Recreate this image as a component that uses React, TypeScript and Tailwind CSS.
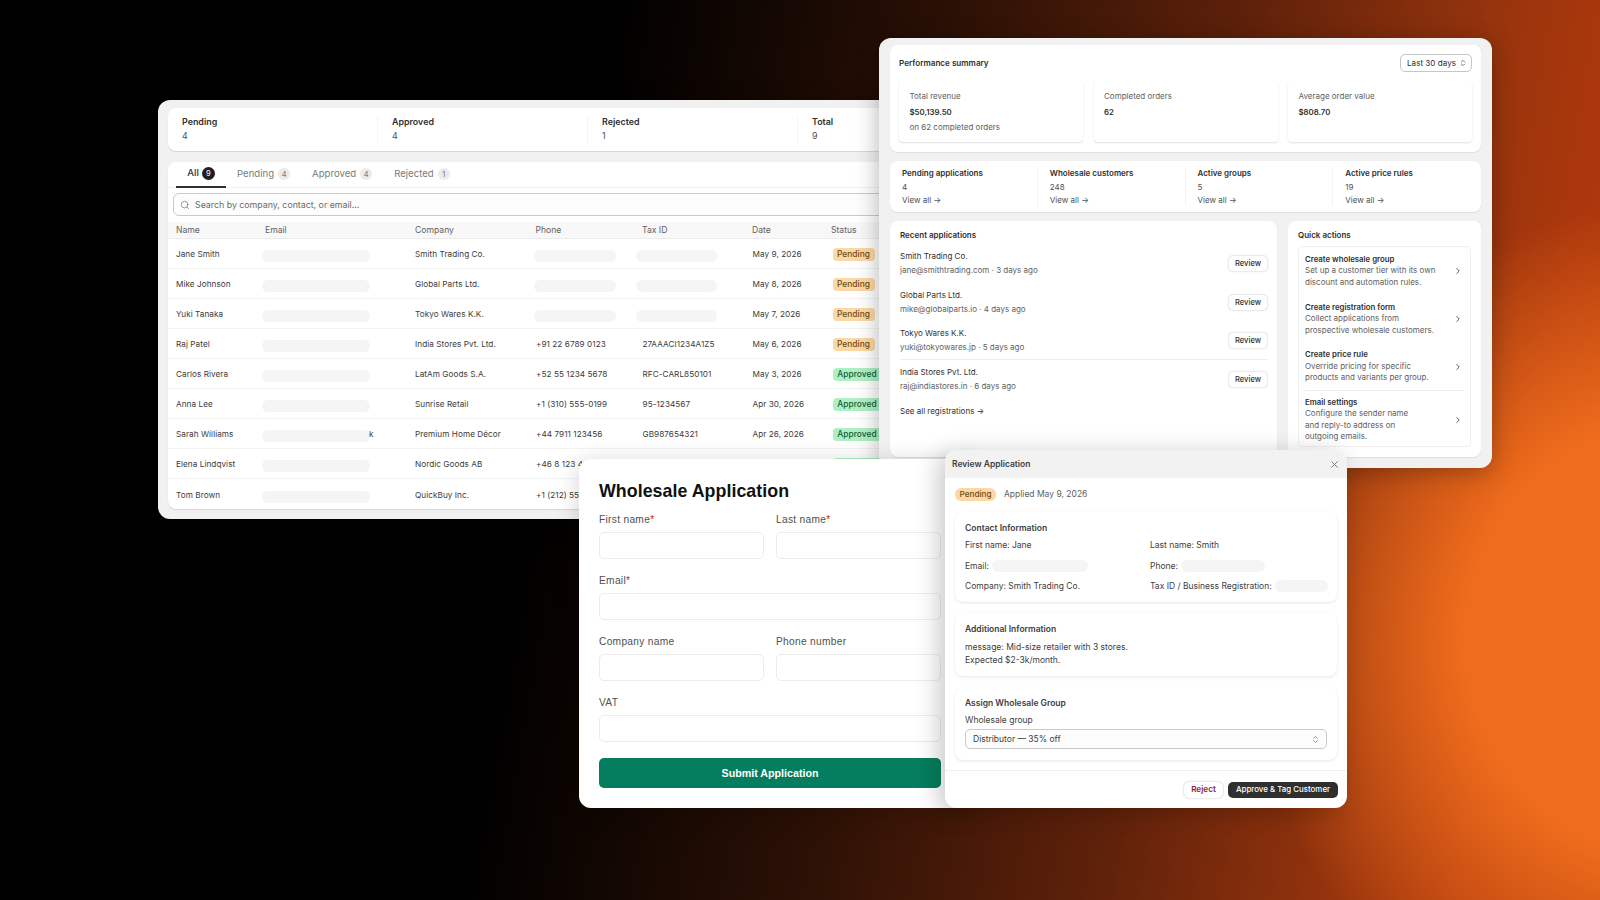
import React from "react";
import { Search, ChevronsUpDown, ChevronRight, X } from "lucide-react";

const Pill = ({ w }: { w: string }) => <div className={`${w} h-3 rounded-md bg-[#f5f5f5]`} />;

function Badge({ kind }: { kind: "Pending" | "Approved" }) {
  return kind === "Pending" ? (
    <span className="inline-flex h-[13px] w-[42px] items-center justify-center rounded bg-[#fbd8a4] text-[8.4px] font-medium text-[#6f4c12]">Pending</span>
  ) : (
    <span className="inline-flex h-[13px] w-[49px] items-center justify-center rounded bg-[#aff0c3] text-[8.4px] font-medium text-[#0f5c33]">Approved</span>
  );
}

const rows: { n: string; c: string; p?: string; t?: string; d: string; s: "Pending" | "Approved" }[] = [
  { n: "Jane Smith", c: "Smith Trading Co.", d: "May 9, 2026", s: "Pending" },
  { n: "Mike Johnson", c: "Global Parts Ltd.", d: "May 8, 2026", s: "Pending" },
  { n: "Yuki Tanaka", c: "Tokyo Wares K.K.", d: "May 7, 2026", s: "Pending" },
  { n: "Raj Patel", c: "India Stores Pvt. Ltd.", p: "+91 22 6789 0123", t: "27AAACI1234A1Z5", d: "May 6, 2026", s: "Pending" },
  { n: "Carlos Rivera", c: "LatAm Goods S.A.", p: "+52 55 1234 5678", t: "RFC-CARL850101", d: "May 3, 2026", s: "Approved" },
  { n: "Anna Lee", c: "Sunrise Retail", p: "+1 (310) 555-0199", t: "95-1234567", d: "Apr 30, 2026", s: "Approved" },
  { n: "Sarah Williams", c: "Premium Home Décor", p: "+44 7911 123456", t: "GB987654321", d: "Apr 26, 2026", s: "Approved" },
  { n: "Elena Lindqvist", c: "Nordic Goods AB", p: "+46 8 123 456 78", t: "SE556677889901", d: "Apr 21, 2026", s: "Approved" },
  { n: "Tom Brown", c: "QuickBuy Inc.", p: "+1 (212) 555-0147", t: "13-7654321", d: "Apr 18, 2026", s: "Approved" },
];

function TableWindow() {
  return (
    <div className="absolute left-[158px] top-[100px] flex h-[419px] w-[860px] flex-col gap-[11px] rounded-xl bg-[#f1f1f1] px-[10px] pb-[10px] pt-[8px] text-[#303030] shadow-[0_4px_24px_rgba(0,0,0,0.3)]">
      <div className="grid h-[43px] shrink-0 grid-cols-4 rounded-lg bg-white py-[8px] shadow-[0_1px_1px_rgba(0,0,0,0.12)]">
        {[["Pending", "4"], ["Approved", "4"], ["Rejected", "1"], ["Total", "9"]].map(([l, v], i) => (
          <div key={l} className={`flex flex-col gap-[2px] pl-[14px] text-[8.9px] leading-[12px] ${i < 3 ? "border-r border-[#f5f5f5]" : ""}`}>
            <span className="font-semibold">{l}</span>
            <span className="text-[#505050]">{v}</span>
          </div>
        ))}
      </div>
      <div className="flex flex-1 flex-col rounded-lg bg-white shadow-[0_1px_1px_rgba(0,0,0,0.12)]">
        <div className="flex h-[26px] shrink-0 items-center border-b border-[#f1f1f1] pl-2 text-[9.6px]">
          <div className="flex h-[26px] w-[50px] items-center justify-center gap-[3px] border-b-2 border-[#303030]">
            <span className="font-medium">All</span>
            <span className="flex h-[13px] w-[13px] items-center justify-center rounded-full bg-[#1f1f1f] text-[7.5px] text-white">9</span>
          </div>
          {[["Pending", "4", "ml-[11px]"], ["Approved", "4", "ml-[22px]"], ["Rejected", "1", "ml-[22px]"]].map(([l, v, m]) => (
            <div key={l} className={`flex items-center gap-[4px] text-[#7a7a7a] ${m}`}>
              <span>{l}</span>
              <span className="flex h-[12px] w-[12px] items-center justify-center rounded-full bg-[#ebebeb] text-[7.5px]">{v}</span>
            </div>
          ))}
        </div>
        <div className="mx-[5px] mt-[5px] flex h-[23px] shrink-0 items-center gap-[5px] rounded-md border border-[#c9c9c9] bg-[#fdfdfd] pl-[6px] text-[8.8px] text-[#6b6b6b]">
          <Search className="h-[10px] w-[10px]" strokeWidth={1.6} />
          <span>Search by company, contact, or email...</span>
        </div>
        <div className="mt-[6px] flex h-[17px] shrink-0 items-center border-b border-[#ececec] bg-[#f8f8f8] text-[8.6px] text-[#616161]">
          <span className="w-[97px] pl-2">Name</span>
          <span className="w-[150px]">Email</span>
          <span className="w-[120.5px]">Company</span>
          <span className="w-[106.5px]">Phone</span>
          <span className="w-[110px]">Tax ID</span>
          <span className="w-[79px]">Date</span>
          <span>Status</span>
        </div>
        {rows.map((r, i) => (
          <div key={r.n} className={`flex h-[30px] shrink-0 items-center pt-[2px] text-[8.2px] tracking-[0.05px] text-[#3c3c3c] ${i < 8 ? "border-b border-[#f3f3f3]" : ""}`}>
            <span className="w-[94px] pl-2">{r.n}</span>
            <div className="relative w-[153px] pt-[3px]">
              <Pill w="w-[108px]" />
              {r.n === "Sarah Williams" && <span className="absolute left-[107px] top-[1px]">k</span>}
            </div>
            <span className="w-[118.5px]">{r.c}</span>
            {r.p ? <span className="w-[109px] pl-[2.5px]">{r.p}</span> : <div className="w-[102px] pt-[3px]"><Pill w="w-[82px]" /></div>}
            {r.t ? <span className="w-[110px]">{r.t}</span> : <div className="w-[117px] pt-[3px]"><Pill w="w-[81px]" /></div>}
            <span className="w-[80px]">{r.d}</span>
            <Badge kind={r.s} />
          </div>
        ))}
      </div>
    </div>
  );
}

function PerformanceWindow() {
  return (
    <div className="absolute left-[879px] top-[38px] flex h-[430px] w-[613px] flex-col gap-[9px] rounded-xl bg-[#f1f1f1] p-[7px_11px_10px] text-[#303030] shadow-[0_4px_24px_rgba(0,0,0,0.3)]">
      <div className="h-[107px] shrink-0 rounded-lg bg-white px-[9px] pt-[9px] shadow-[0_1px_1px_rgba(0,0,0,0.08)]">
        <div className="flex h-[18px] items-center justify-between">
          <span className="text-[8.1px] font-semibold">Performance summary</span>
          <span className="flex h-[18px] w-[72px] items-center justify-center gap-[3px] rounded-[5px] border border-[#c6c6c6] pl-[2px] text-[8.1px]">
            Last 30 days <ChevronsUpDown className="h-[8px] w-[8px]" />
          </span>
        </div>
        <div className="mt-[9px] grid h-[61px] grid-cols-3 gap-[10.5px]">
          {[["Total revenue", "$50,139.50", "on 62 completed orders"], ["Completed orders", "62", ""], ["Average order value", "$808.70", ""]].map(([a, b, c]) => (
            <div key={a} className="flex flex-col gap-[3.5px] rounded bg-white px-[10.5px] pt-[9px] text-[8px] leading-[12px] shadow-[0_1px_2px_rgba(0,0,0,0.13)]">
              <span className="text-[#616161]">{a}</span>
              <span className="text-[7.8px] font-semibold">{b}</span>
              {c && <span className="text-[#616161]">{c}</span>}
            </div>
          ))}
        </div>
      </div>
      <div className="grid h-[51px] shrink-0 grid-cols-4 rounded-lg bg-white py-[6px] shadow-[0_1px_1px_rgba(0,0,0,0.08)]">
        {[["Pending applications", "4"], ["Wholesale customers", "248"], ["Active groups", "5"], ["Active price rules", "19"]].map(([a, b], i) => (
          <div key={a} className={`flex flex-col gap-[1.5px] pl-3 text-[8px] leading-[12px] ${i < 3 ? "border-r border-[#f3f3f3]" : ""}`}>
            <span className="font-semibold">{a}</span>
            <span className="text-[#505050]">{b}</span>
            <span className="text-[#505050]">View all →</span>
          </div>
        ))}
      </div>
      <div className="flex h-[236px] shrink-0 gap-[11px]">
        <div className="w-[387px] rounded-lg bg-white px-[10px] pt-[8px] text-[8px] shadow-[0_1px_1px_rgba(0,0,0,0.08)]">
          <div className="mb-[3px] font-semibold leading-[12px]">Recent applications</div>
          {[
            ["Smith Trading Co.", "jane@smithtrading.com · 3 days ago", ""],
            ["Global Parts Ltd.", "mike@globalparts.io · 4 days ago", ""],
            ["Tokyo Wares K.K.", "yuki@tokyowares.jp · 5 days ago", "border-b border-[#ececec]"],
            ["India Stores Pvt. Ltd.", "raj@indiastores.in · 6 days ago", ""],
          ].map(([a, b, c]) => (
            <div key={a} className={`flex h-[38.7px] items-center justify-between ${c}`}>
              <div className="flex flex-col gap-[2px] leading-[12px]">
                <span>{a}</span>
                <span className="text-[#616161]">{b}</span>
              </div>
              <span className="mt-[1px] flex h-[15px] w-[38px] items-center justify-center rounded bg-white text-[7.6px] font-medium shadow-[0_0_2px_rgba(0,0,0,0.3)]">Review</span>
            </div>
          ))}
          <div className="mt-[6px] leading-[12px]">See all registrations →</div>
        </div>
        <div className="flex-1 rounded-lg bg-white px-[10px] pt-[8px] text-[8px] shadow-[0_1px_1px_rgba(0,0,0,0.08)]">
          <div className="mb-[5px] font-semibold leading-[12px]">Quick actions</div>
          <div className="h-[201px] rounded border border-[#f0f0f0] px-[6px]">
            {[
              ["Create wholesale group", ["Set up a customer tier with its own", "discount and automation rules."], ""],
              ["Create registration form", ["Collect applications from", "prospective wholesale customers."], ""],
              ["Create price rule", ["Override pricing for specific", "products and variants per group."], "border-b border-[#ececec]"],
              ["Email settings", ["Configure the sender name", "and reply-to address on", "outgoing emails."], ""],
            ].map(([t, d, c]) => (
              <div key={t as string} className={`flex items-center justify-between py-[1.5px] leading-[11.4px] ${c} ${(d as string[]).length === 2 ? "h-[48px]" : "h-[57px]"}`}>
                <div className="flex flex-col text-[#616161]">
                  <span className="text-[7.8px] font-semibold text-[#303030]">{t}</span>
                  {(d as string[]).map((x) => <span key={x}>{x}</span>)}
                </div>
                <ChevronRight className="mr-[1px] h-[10px] w-[10px] text-[#404040]" />
              </div>
            ))}
          </div>
        </div>
      </div>
    </div>
  );
}

function Field({ label, req }: { label: string; req?: boolean }) {
  return (
    <div className="flex flex-col gap-[7px]">
      <span className="pt-[1px] text-[10.2px] leading-[12px] tracking-[0.3px] text-[#505050]">{label}{req && <span className="text-[#c0202a]">*</span>}</span>
      <div className="-mt-[1px] h-[27px] rounded-[5px] border border-[#ececec] bg-white" />
    </div>
  );
}

function FormWindow() {
  return (
    <div className="absolute left-[579px] top-[459px] flex h-[349px] w-[400px] flex-col rounded-xl bg-white pl-[20px] pr-[38px] pt-[21px] font-['Liberation_Sans',sans-serif] shadow-[0_4px_24px_rgba(0,0,0,0.18)]">
      <h1 className="text-[17.8px] font-bold leading-[22px] tracking-[0.05px] text-[#111111]">Wholesale Application</h1>
      <div className="mt-[11px] flex flex-col gap-[15px]">
        <div className="grid grid-cols-2 gap-[12px]"><Field label="First name" req /><Field label="Last name" req /></div>
        <Field label="Email" req />
        <div className="grid grid-cols-2 gap-[12px]"><Field label="Company name" /><Field label="Phone number" /></div>
        <Field label="VAT" />
      </div>
      <div className="mt-[16px] flex h-[30px] items-center justify-center rounded-[5px] bg-[#047e5e] text-[10.7px] font-bold text-white">Submit Application</div>
    </div>
  );
}

function ReviewWindow() {
  const card = "rounded-lg bg-white shadow-[0_1px_3px_rgba(0,0,0,0.1)] px-[10px]";
  return (
    <div className="absolute left-[945px] top-[450px] flex h-[358px] w-[402px] flex-col overflow-hidden rounded-xl bg-white text-[8.5px] text-[#404040] shadow-[-6px_4px_24px_rgba(0,0,0,0.22)]">
      <div className="flex h-[28px] shrink-0 items-center justify-between bg-[#f2f2f2] pl-[7px] pr-[7px]">
        <span className="font-semibold">Review Application</span>
        <X className="h-[11px] w-[11px] text-[#707070]" />
      </div>
      <div className="mx-[10px] mt-[10px] flex h-[13px] items-center gap-2">
        <span className="inline-flex h-[13px] w-[41px] items-center justify-center rounded-md bg-[#fbd8a4] text-[8.2px] font-medium text-[#6f4c12]">Pending</span>
        <span className="text-[#616161]">Applied May 9, 2026</span>
      </div>
      <div className={`${card} mx-[10px] mt-[11px] h-[90px] pt-[10px] leading-[12px]`}>
        <div className="font-semibold">Contact Information</div>
        <div className="mt-[5px] grid grid-cols-[185px_1fr] gap-y-[8.5px]">
          <span>First name: Jane</span><span>Last name: Smith</span>
          <div className="flex items-center"><span>Email:</span><Pill w="w-[96px] ml-[3px]" /></div>
          <div className="flex items-center"><span>Phone:</span><Pill w="w-[84px] ml-[3px]" /></div>
          <span>Company: Smith Trading Co.</span>
          <div className="flex items-center whitespace-nowrap"><span>Tax ID / Business Registration:</span><Pill w="w-[53px] ml-[3px]" /></div>
        </div>
      </div>
      <div className={`${card} mx-[10px] mt-[11px] h-[63px] pt-[10px] leading-[12px]`}>
        <div className="font-semibold">Additional Information</div>
        <div className="mt-[6px]">message: Mid-size retailer with 3 stores.</div>
        <div className="mt-[1px]">Expected $2-3k/month.</div>
      </div>
      <div className={`${card} mx-[10px] mt-[11px] h-[73px] pt-[10px] leading-[12px]`}>
        <div className="font-semibold">Assign Wholesale Group</div>
        <div className="mt-[5px]">Wholesale group</div>
        <div className="mt-[3px] flex h-[20px] items-center justify-between rounded-[5px] border border-[#c9c9c9] bg-[#fdfdfd] pl-[7px] pr-[6px]">
          <span>Distributor — 35% off</span>
          <ChevronsUpDown className="h-[9px] w-[9px] text-[#707070]" />
        </div>
      </div>
      <div className="mt-[10px] flex flex-1 items-center justify-end gap-[5px] border-t border-[#f1f1f1] pr-[9px]">
        <span className="flex h-[16px] w-[39px] items-center justify-center rounded-[5px] bg-white text-[8.2px] font-semibold text-[#8e1f3a] shadow-[0_0_2px_rgba(0,0,0,0.3)]">Reject</span>
        <span className="flex h-[16px] w-[110px] items-center justify-center rounded-[5px] bg-[#2f2f2f] text-[7.9px] font-medium text-white">Approve &amp; Tag Customer</span>
      </div>
    </div>
  );
}

export default function App() {
  return (
    <div className="relative h-[900px] w-[1600px] overflow-hidden bg-[radial-gradient(ellipse_430px_440px_at_1680px_640px,#ee6c1c_0%,#ee6c1c_50%,rgba(238,108,28,0)_100%),linear-gradient(100deg,#000000_35%,#2a1005_54%,#5e210a_71%,#96340d_85%,#ac370c_92%,#ac3a0c_100%)] font-['Inter',sans-serif]">
      <TableWindow />
      <PerformanceWindow />
      <FormWindow />
      <ReviewWindow />
    </div>
  );
}
